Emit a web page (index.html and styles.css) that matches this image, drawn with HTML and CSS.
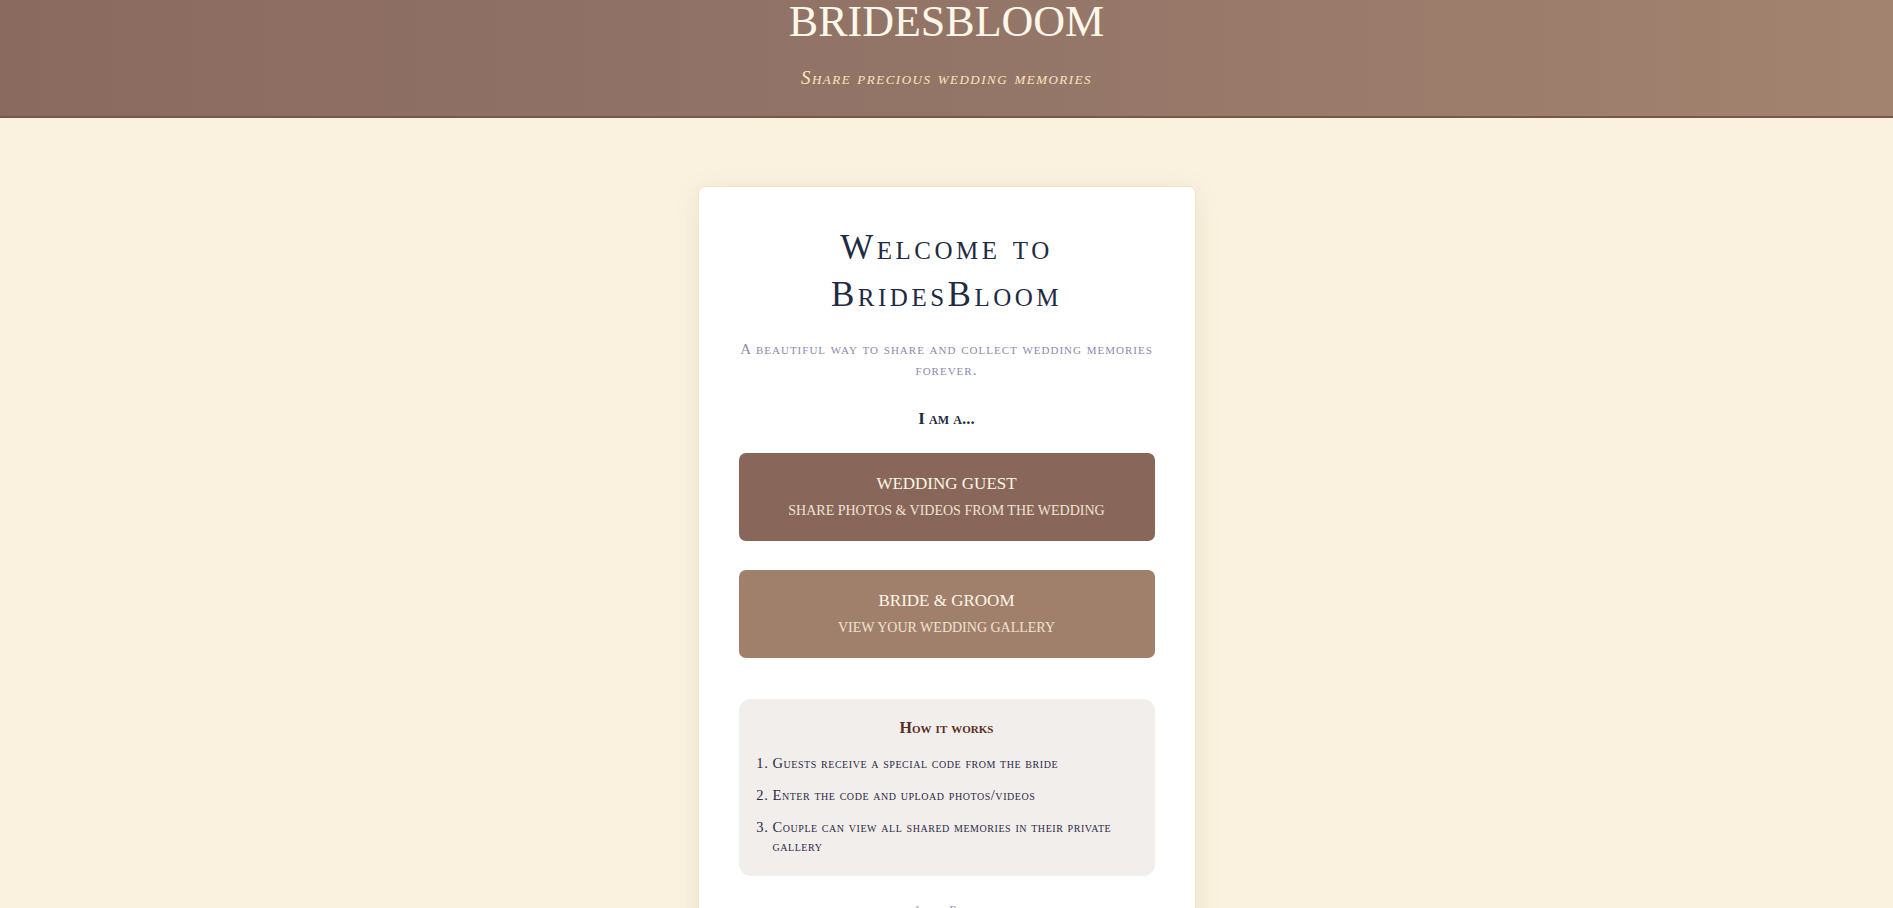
FILE: index.html
```html
<!DOCTYPE html>
<html lang="en">
<head>
<meta charset="utf-8">
<title>BridesBloom</title>
<link rel="stylesheet" href="styles.css">
</head>
<body>
<header class="site-header">
  <h1 class="brand">BridesBloom</h1>
  <p class="tagline">Share precious wedding memories</p>
</header>
<main class="page">
  <section class="card">
    <h2 class="welcome">Welcome to BridesBloom</h2>
    <p class="intro">A beautiful way to share and collect wedding memories forever.</p>
    <h3 class="prompt">I am a...</h3>
    <div class="roles">
      <button class="role role-guest" type="button">
        <span class="role-title">Wedding Guest</span>
        <span class="role-desc">Share photos &amp; videos from the wedding</span>
      </button>
      <button class="role role-couple" type="button">
        <span class="role-title">Bride &amp; Groom</span>
        <span class="role-desc">View your wedding gallery</span>
      </button>
    </div>
    <div class="how">
      <h4 class="how-title">How it works</h4>
      <ol class="how-list">
        <li>Guests receive a special code from the bride</li>
        <li>Enter the code and upload photos/videos</li>
        <li>Couple can view all shared memories in their private gallery</li>
      </ol>
    </div>
    <a class="admin" href="#">Admin Panel</a>
  </section>
</main>
</body>
</html>
```
FILE: styles.css
```css
* { box-sizing: border-box; }
html, body { margin: 0; padding: 0; }
body {
  background: #faf2df;
  font-family: "Liberation Serif", "DejaVu Serif", serif;
  font-variant: small-caps;
  color: #1f2a44;
}
.site-header {
  height: 118px;
  background: linear-gradient(90deg, #8a6a5f 0%, #937568 50%, #a2836f 100%);
  border-bottom: 2px solid #7a5749;
  display: flex;
  flex-direction: column;
  align-items: center;
}
.brand {
  margin: 0;
  font-size: 44px;
  line-height: 44px;
  font-weight: 400;
  text-transform: uppercase;
  letter-spacing: 0;
  color: #fff8ea;
}
.tagline {
  margin: 20px 0 0;
  font-size: 19px;
  line-height: 27px;
  font-style: italic;
  letter-spacing: 1.5px;
  color: #f9e6bd;
}
.page {
  display: flex;
  justify-content: center;
  padding-top: 68px;
}
.card {
  width: 498px;
  background: #fff;
  border: 1px solid #efe5cf;
  border-radius: 7px;
  box-shadow: 0 4px 24px rgba(150, 120, 70, 0.12);
  padding: 37px 40px 20px;
  text-align: center;
}
.welcome {
  margin: 0;
  font-size: 35px;
  line-height: 47px;
  font-weight: 400;
  letter-spacing: 3.5px;
  color: #1f2a44;
}
.intro {
  margin: 21px 0 0;
  font-size: 15px;
  line-height: 21px;
  letter-spacing: 1px;
  color: #8c8aaa;
}
.prompt {
  margin: 25px 0 0;
  font-size: 17px;
  line-height: 25px;
  font-weight: 700;
  color: #1f2a44;
}
.roles {
  display: flex;
  flex-direction: column;
  gap: 29px;
  margin-top: 22px;
}
.role {
  display: flex;
  flex-direction: column;
  align-items: center;
  gap: 4px;
  width: 100%;
  padding: 19px 16px;
  border: none;
  border-radius: 7px;
  font-family: inherit;
  font-variant: small-caps;
  text-transform: uppercase;
  cursor: pointer;
}
.role-guest { background: #88665a; }
.role-couple { background: #a0806b; }
.role-title {
  font-size: 17px;
  line-height: 24px;
  color: #fff6e6;
}
.role-desc {
  font-size: 14px;
  line-height: 22px;
  letter-spacing: 0;
  color: #f1e2d2;
}
.how {
  margin-top: 41px;
  background: #f2eeec;
  border-radius: 12px;
  padding: 17px 20px 20px;
  text-align: left;
}
.how-title {
  margin: 0 0 14px;
  text-align: center;
  font-size: 16px;
  line-height: 24px;
  font-weight: 700;
  color: #5a2f25;
}
.how-list {
  margin: 0;
  padding-left: 14px;
  font-size: 14.5px;
  line-height: 19px;
  letter-spacing: 0.55px;
  color: #2b2a45;
}
.how-list li { margin-bottom: 13px; }
.how-list li:last-child { margin-bottom: 0; }
.admin {
  display: inline-block;
  margin-top: 24px;
  font-size: 13px;
  line-height: 20px;
  color: #9c9cb6;
  text-decoration: none;
}
```
